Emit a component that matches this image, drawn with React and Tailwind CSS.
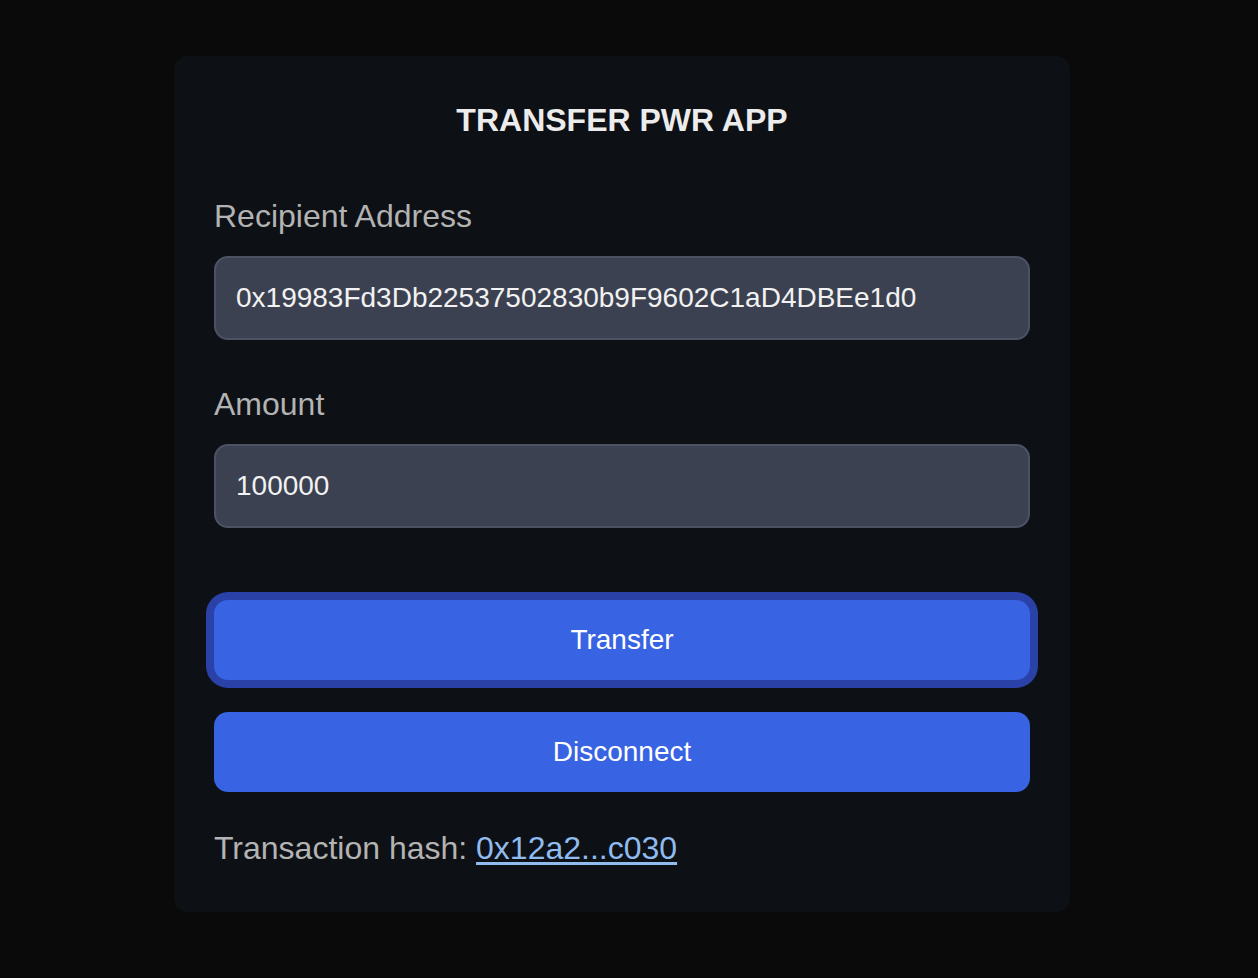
import { useState } from "react";

export default function App() {
  // form values shown in the screenshot
  const [recipient, setRecipient] = useState(
    "0x19983Fd3Db22537502830b9F9602C1aD4DBEe1d0"
  );
  const [amount, setAmount] = useState("100000");

  return (
    <div
      className="min-h-screen bg-[#0a0a0a] pt-[56px] pr-[14px] flex justify-center items-start"
      style={{ fontFamily: '"Liberation Sans", Arial, sans-serif' }}
    >
      <div className="w-[896px] bg-[#0d1014] rounded-[14px] px-10 pt-10 pb-10 flex flex-col">
        <h1 className="text-center text-[32px] leading-[48px] font-bold text-[#ececec]">
          TRANSFER PWR APP
        </h1>

        {/* recipient field */}
        <label className="mt-12 mb-4 text-[32px] leading-[48px] text-[#b3b3b3]">
          Recipient Address
        </label>
        <input
          type="text"
          value={recipient}
          onChange={(e) => setRecipient(e.target.value)}
          className="h-[84px] w-full rounded-[14px] border-2 border-[#4b5263] bg-[#3b4151] px-5 text-[28px] text-[#f2f2f2] outline-none"
        />

        {/* amount field */}
        <label className="mt-10 mb-4 text-[32px] leading-[48px] text-[#b3b3b3]">
          Amount
        </label>
        <input
          type="text"
          value={amount}
          onChange={(e) => setAmount(e.target.value)}
          className="h-[84px] w-full rounded-[14px] border-2 border-[#4b5263] bg-[#3b4151] px-5 text-[28px] text-[#f2f2f2] outline-none"
        />

        {/* buttons */}
        <button className="mt-[72px] h-20 w-full rounded-[14px] bg-[#3863e3] text-[28px] text-white ring-8 ring-[#2a41a8]">
          Transfer
        </button>
        <button className="mt-8 h-20 w-full rounded-[14px] bg-[#3863e3] text-[28px] text-white">
          Disconnect
        </button>

        <p className="mt-8 text-[32px] leading-[48px] text-[#b3b3b3]">
          Transaction hash:{" "}
          <a href="#" className="text-[#90bbef] underline underline-offset-[3px]">
            0x12a2...c030
          </a>
        </p>
      </div>
    </div>
  );
}
